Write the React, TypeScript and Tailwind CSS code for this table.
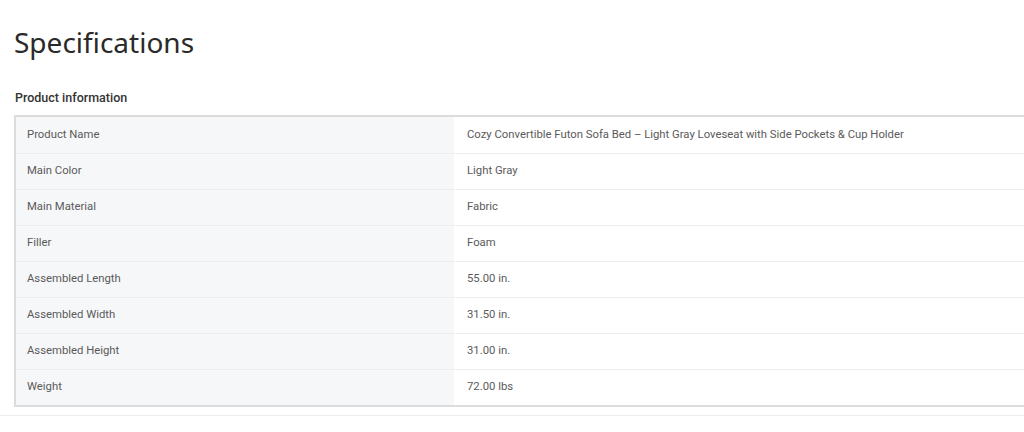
const rows: [string, string][] = [
  ["Product Name", "Cozy Convertible Futon Sofa Bed – Light Gray Loveseat with Side Pockets & Cup Holder"],
  ["Main Color", "Light Gray"],
  ["Main Material", "Fabric"],
  ["Filler", "Foam"],
  ["Assembled Length", "55.00 in."],
  ["Assembled Width", "31.50 in."],
  ["Assembled Height", "31.00 in."],
  ["Weight", "72.00 lbs"],
];

export default function App() {
  return (
    <div className="w-[1024px] h-[432px] overflow-hidden bg-white">
      <div className="pl-[14px] pt-[22px]">
        <h1 className="font-['Noto_Sans',sans-serif] text-[28px] leading-[40px] text-[#2a2a2a] font-normal">
          Specifications
        </h1>
        <h2 className="mt-[26px] font-['Roboto',sans-serif] text-[12.5px] leading-[20px] font-medium text-[#333] pl-px">
          Product information
        </h2>
        <div className="mt-[7px] border-2 border-r-0 border-[#dcdcdc] font-['Roboto',sans-serif] text-[11.3px] text-[#5a5a5a]">
          {rows.map(([label, value], i) => (
            <div
              key={label}
              className={`flex h-[36px] ${i > 0 ? "border-t border-[#ededed]" : ""}`}
            >
              <div className="w-[438px] shrink-0 bg-[#f6f7f9] pl-[11px] flex items-center">{label}</div>
              <div className="flex-1 pl-[13px] flex items-center">{value}</div>
            </div>
          ))}
        </div>
      </div>
      <div className="mt-[8px] border-t border-[#ececec]" />
    </div>
  );
}
